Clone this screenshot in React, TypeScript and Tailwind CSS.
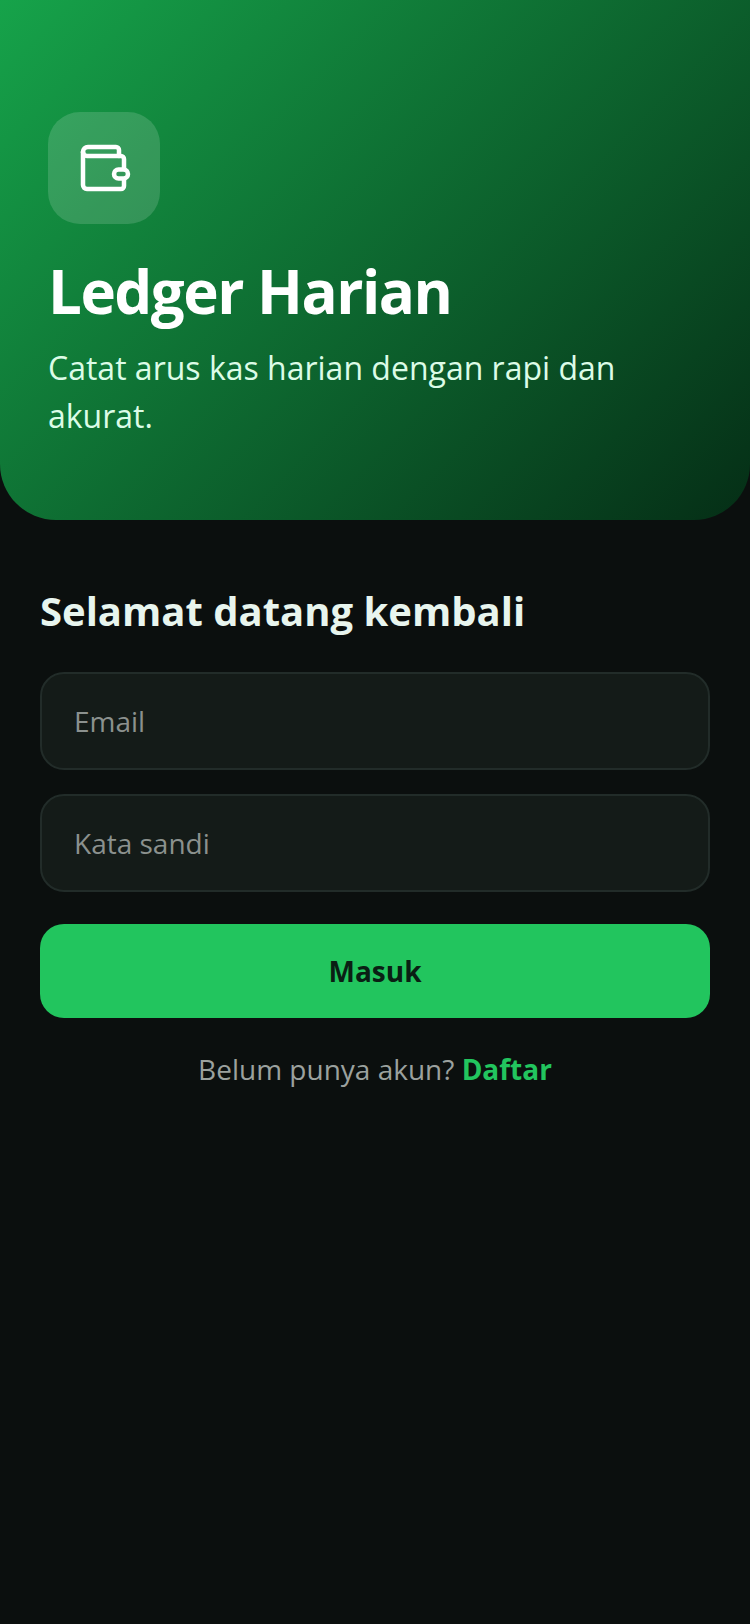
const font = "font-['Open_Sans',sans-serif]";

function WalletIcon() {
  return (
    <svg width="56" height="56" viewBox="0 0 56 56" fill="none" stroke="white" strokeWidth="4.5" strokeLinecap="round" strokeLinejoin="round">
      <path d="M7 12a5 5 0 0 1 5-5h28a3 3 0 0 1 3 3v6" />
      <path d="M7 12v33a4 4 0 0 0 4 4h34a3 3 0 0 0 3-3v-6" />
      <path d="M7 12a4 4 0 0 0 4 4h34a3 3 0 0 1 3 3v10" />
      <rect x="38" y="29.5" width="14" height="9" rx="4.5" />
    </svg>
  );
}

function Field({ label }: { label: string }) {
  return (
    <div className="flex h-[98px] items-center rounded-[24px] border-2 border-[#222c29] bg-[#141b18] px-[32px] text-[28px] text-[#8b918e]">
      {label}
    </div>
  );
}

export default function App() {
  return (
    <div className={`min-h-[1624px] bg-[#0b0f0e] ${font}`}>
      <header className="h-[520px] rounded-b-[56px] bg-[linear-gradient(135deg,#16a34a,#052e16)] px-[48px] pt-[112px]">
        <div className="flex h-[112px] w-[112px] items-center justify-center rounded-[32px] bg-white/15">
          <WalletIcon />
        </div>
        <h1 className="mt-[29px] text-[60px] leading-[76px] font-bold tracking-[-1.5px] text-white">Ledger Harian</h1>
        <p className="mt-[15px] text-[32px] leading-[48px] text-[#dcfce7]">Catat arus kas harian dengan rapi dan akurat.</p>
      </header>
      <main className="px-[40px] pt-[63px]">
        <h2 className="text-[40px] leading-[56px] font-bold text-[#e8f5ee]">Selamat datang kembali</h2>
        <div className="mt-[33px] flex flex-col gap-[24px]">
          <Field label="Email" />
          <Field label="Kata sandi" />
        </div>
        <button className="mt-[32px] h-[94px] w-full rounded-[24px] bg-[#22c55e] text-[28px] font-bold text-[#0a1f14]">Masuk</button>
        <p className="mt-[32px] text-center text-[28px] leading-[38px] text-[#9ba19e]">
          Belum punya akun? <span className="font-bold text-[#22c55e]">Daftar</span>
        </p>
      </main>
    </div>
  );
}
